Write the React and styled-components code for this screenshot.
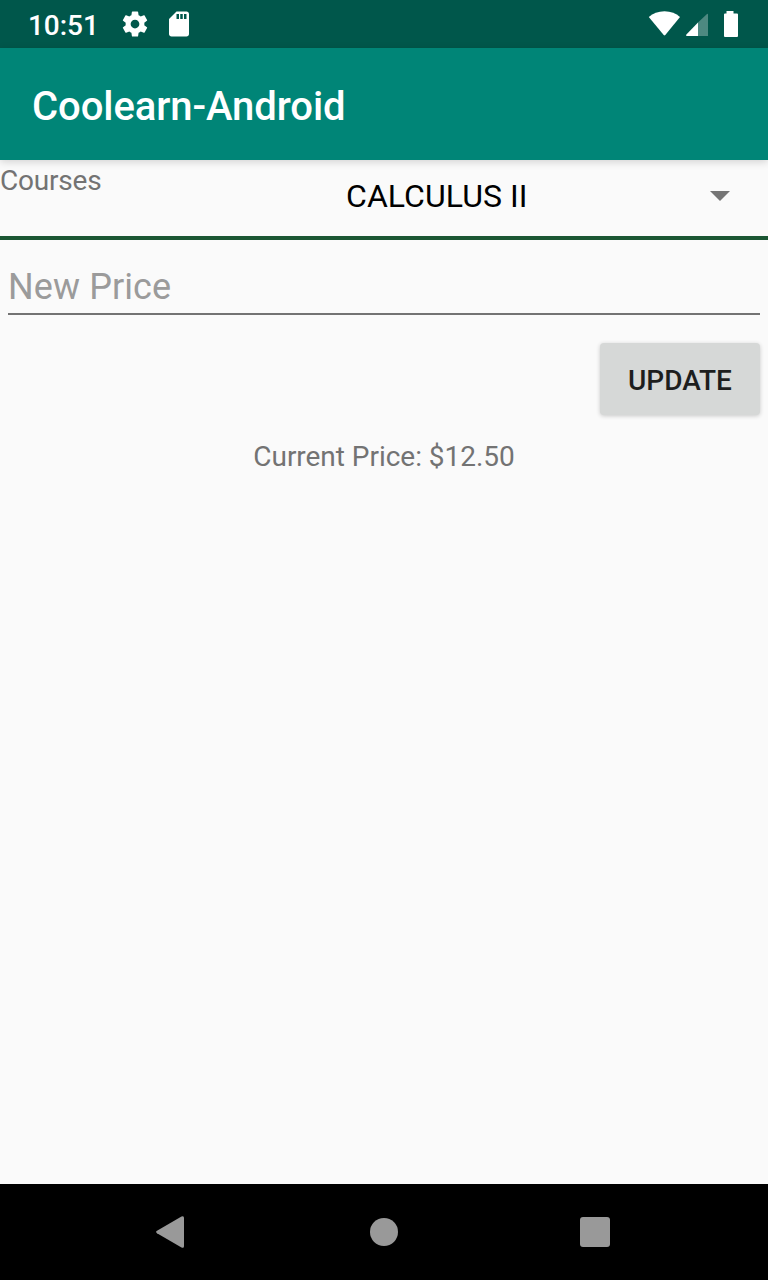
import React from "react";
import styled, { createGlobalStyle } from "styled-components";

const GlobalStyle = createGlobalStyle`
  * { box-sizing: border-box; }
  body { margin: 0; background: #fafafa; font-family: Roboto, "Noto Sans", sans-serif; }
`;

const Screen = styled.div`
  display: flex;
  flex-direction: column;
  width: 768px;
  height: 1280px;
  background: #fafafa;
  overflow: hidden;
`;

const StatusBar = styled.header`
  display: flex;
  align-items: center;
  justify-content: space-between;
  height: 48px;
  padding: 0 25px 0 28px;
  background: #00574b;
  color: #fff;
`;

const StatusGroup = styled.div`
  display: flex;
  align-items: center;
`;

const Clock = styled.span`
  width: 92px;
  padding-top: 3px;
  font-size: 28px;
  font-weight: 500;
  line-height: 35px;
  letter-spacing: -0.05px;
`;

const Icon = styled.svg`
  display: block;
  flex: none;
  margin-left: ${(p) => p.$gap || 0}px;
  fill: ${(p) => p.$color || "#fff"};
`;

const AppBar = styled.div`
  display: flex;
  align-items: center;
  flex: none;
  height: 112px;
  padding: 6px 32px 0;
  background: #008577;
  box-shadow: 0 2px 8px rgba(0, 0, 0, 0.16);
  z-index: 1;
`;

const Title = styled.h1`
  margin: 0;
  color: #fff;
  font-size: 40px;
  font-weight: 500;
  line-height: 48px;
  letter-spacing: -0.08px;
`;

const Content = styled.main`
  display: flex;
  flex-direction: column;
  flex: 1;
`;

const CourseRow = styled.div`
  display: flex;
  height: 80px;
  border-bottom: 4px solid #1b5633;
`;

const Label = styled.span`
  width: 330px;
  padding-top: 4px;
  color: #737373;
  font-size: 28px;
  line-height: 33px;
  letter-spacing: -0.2px;
`;

const Spinner = styled.div`
  display: flex;
  flex: 1;
  align-items: center;
  justify-content: space-between;
  height: 72px;
  padding: 0 38px 0 16px;
  color: #000;
  font-size: 32px;
  line-height: 38px;
  letter-spacing: 0.05px;
`;

const PriceInput = styled.input`
  height: 75px;
  margin: 0 8px;
  padding: 21px 0 0;
  border: 0;
  border-bottom: 2px solid #737373;
  border-radius: 0;
  outline: 0;
  background: transparent;
  color: #212121;
  font: 36px Roboto, "Noto Sans", sans-serif;
  letter-spacing: 0.1px;

  &::placeholder {
    color: #9b9b9b;
    opacity: 1;
  }
`;

const Actions = styled.div`
  display: flex;
  justify-content: flex-end;
  padding: 28px 8px 0;
`;

const UpdateButton = styled.button`
  width: 160px;
  height: 72px;
  padding: 3px 0 0;
  border: 0;
  border-radius: 4px;
  background: #d6d8d7;
  box-shadow: 0 1px 4px rgba(0, 0, 0, 0.2);
  color: #1d1e1e;
  font: 500 28px Roboto, "Noto Sans", sans-serif;
`;

const CurrentPrice = styled.p`
  margin: 25px 0 0;
  color: #737373;
  font-size: 28px;
  line-height: 33px;
  letter-spacing: -0.03px;
  text-align: center;
`;

const NavBar = styled.nav`
  display: grid;
  grid-template-columns: 214px 210px 30px;
  align-items: center;
  flex: none;
  height: 96px;
  padding-left: 156px;
  background: #000;
`;

const NAV_COLOR = "#999";

export default function App() {
  return (
    <>
      <GlobalStyle />
      <Screen>
        <StatusBar>
          <StatusGroup>
            <Clock>10:51</Clock>
            <Icon width="30" height="30" viewBox="0 0 24 24">
              <path d="M19.43 12.98c.04-.32.07-.64.07-.98s-.03-.66-.07-.98l2.11-1.65c.19-.15.24-.42.12-.64l-2-3.46c-.12-.22-.39-.3-.61-.22l-2.49 1c-.52-.4-1.08-.73-1.69-.98l-.38-2.65C14.46 2.18 14.25 2 14 2h-4c-.25 0-.46.18-.49.42l-.38 2.65c-.61.25-1.17.59-1.69.98l-2.49-1c-.23-.09-.49 0-.61.22l-2 3.46c-.13.22-.07.49.12.64l2.11 1.65c-.04.32-.07.65-.07.98s.03.66.07.98l-2.11 1.65c-.19.15-.24.42-.12.64l2 3.46c.12.22.39.3.61.22l2.49-1c.52.4 1.08.73 1.69.98l.38 2.65c.03.24.24.42.49.42h4c.25 0 .46-.18.49-.42l.38-2.65c.61-.25 1.17-.59 1.69-.98l2.49 1c.23.09.49 0 .61-.22l2-3.46c.12-.22.07-.49-.12-.64l-2.11-1.65zM12 15.5c-1.93 0-3.5-1.57-3.5-3.5s1.57-3.5 3.5-3.5 3.5 1.57 3.5 3.5-1.57 3.5-3.5 3.5z" />
            </Icon>
            <Icon $gap={14} width="30" height="30" viewBox="0 0 24 24">
              <path d="M18 2h-8L4.02 8 4 20c0 1.1.9 2 2 2h12c1.1 0 2-.9 2-2V4c0-1.1-.9-2-2-2zm-6 6h-2V4h2v4zm3 0h-2V4h2v4zm3 0h-2V4h2v4z" />
            </Icon>
          </StatusGroup>
          <StatusGroup>
            <Icon width="32" height="28" viewBox="0 0 32 28">
              <path d="M.8 7C5 3.4 10.2 1.3 16.5 1.3S28 3.4 32 7L17.300 25.1q-.8.9-1.600 0Z" />
            </Icon>
            <Icon $gap={6} width="22" height="28" viewBox="0 0 22 28">
              <path d="M21 4q1-.8 1 .6V26H12V12.600Z" opacity=".3" />
              <path d="M12 12.600V26H.8q-1.200-.5-.4-1.600Z" />
            </Icon>
            <Icon $gap={11} width="24" height="28" viewBox="0 0 24 28">
              <path d="M7.500 1h7v2.500H18q1 0 1 1V26q0 1-1 1H6q-1 0-1-1V4.500q0-1 1-1h1.500Z" />
            </Icon>
          </StatusGroup>
        </StatusBar>
        <AppBar>
          <Title>Coolearn-Android</Title>
        </AppBar>
        <Content>
          <CourseRow>
            <Label>Courses</Label>
            <Spinner>
              <span>CALCULUS II</span>
              <Icon $color="#757575" width="20" height="10" viewBox="0 0 20 10">
                <path d="M0 0h20L10 10Z" />
              </Icon>
            </Spinner>
          </CourseRow>
          <PriceInput placeholder="New Price" />
          <Actions>
            <UpdateButton>UPDATE</UpdateButton>
          </Actions>
          <CurrentPrice>Current Price: $12.50</CurrentPrice>
        </Content>
        <NavBar>
          <Icon $color={NAV_COLOR} width="28" height="32" viewBox="0 0 28 32">
            <path d="M28 2v28q0 2.700-2.500 1.500L1 17.200q-1.800-1.200 0-2.400L25.500.5Q28-.7 28 2Z" />
          </Icon>
          <Icon $color={NAV_COLOR} width="28" height="28" viewBox="0 0 28 28">
            <circle cx="14" cy="14" r="14" />
          </Icon>
          <Icon $color={NAV_COLOR} width="30" height="30" viewBox="0 0 30 30">
            <rect width="30" height="30" rx="3" />
          </Icon>
        </NavBar>
      </Screen>
    </>
  );
}
